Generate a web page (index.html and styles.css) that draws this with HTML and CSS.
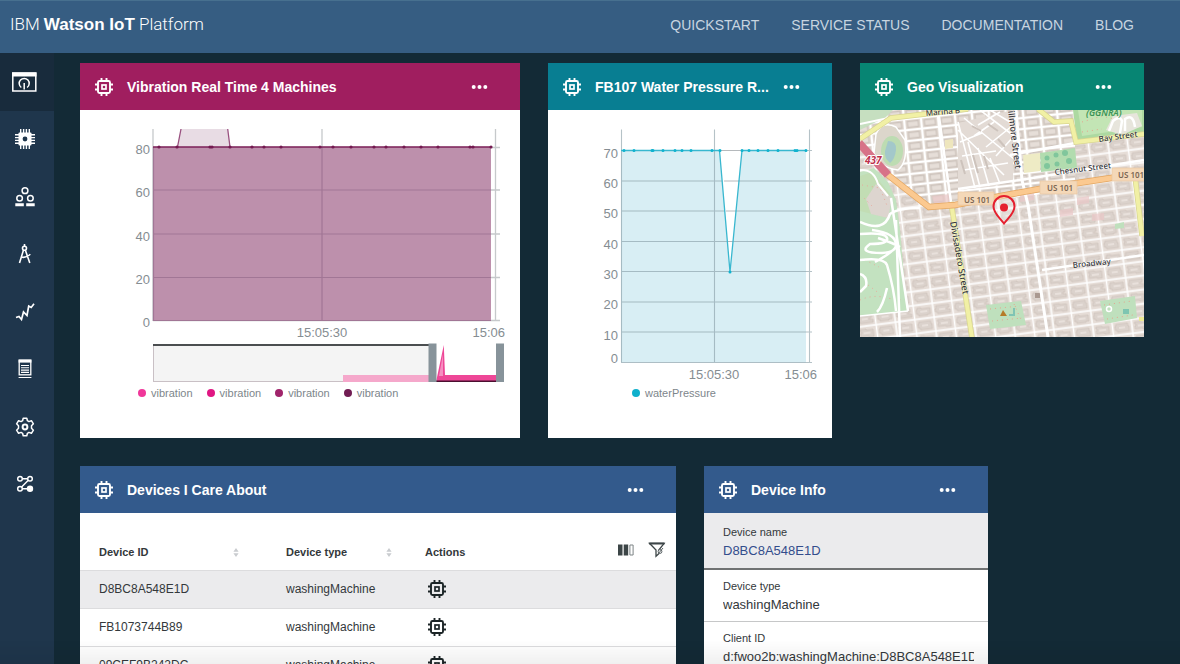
FILE: index.html
```html
<!DOCTYPE html>
<html lang="en">
<head>
<meta charset="utf-8">
<meta name="viewport" content="width=device-width, initial-scale=1">
<title>IBM Watson IoT Platform</title>
<link rel="stylesheet" href="styles.css">
</head>
<body>
<svg class="sprite" aria-hidden="true">
  <symbol id="chip" viewBox="0 0 18 18">
    <rect x="3" y="3" width="12" height="12" rx="1.5" fill="none" stroke="currentColor" stroke-width="1.9"/>
    <rect x="7" y="7" width="4" height="4" fill="none" stroke="currentColor" stroke-width="1.7"/>
    <path d="M6.500 0v3M11.500 0v3M6.500 15v3M11.500 15v3M0 6.500h3M0 11.500h3M15 6.500h3M15 11.500h3" stroke="currentColor" stroke-width="1.900"/>
  </symbol>
  <symbol id="dots" viewBox="0 0 16 6">
    <g fill="currentColor"><circle cx="2.2" cy="3" r="2"/><circle cx="8" cy="3" r="2"/><circle cx="13.8" cy="3" r="2"/></g>
  </symbol>
  <symbol id="sort" viewBox="0 0 6 9">
    <path d="M3 0l2.6 3.8H.4zM3 9L.4 5.2h5.2z" fill="#c9cccf"/>
  </symbol>
</svg>

<header class="topbar">
  <a class="brand" href="#">IBM <b>Watson IoT</b> Platform</a>
  <nav class="toplinks" aria-label="Site">
    <a href="#">QUICKSTART</a>
    <a href="#">SERVICE STATUS</a>
    <a href="#">DOCUMENTATION</a>
    <a href="#">BLOG</a>
  </nav>
</header>

<div class="shell">
  <nav class="sidebar" aria-label="Sections">
    <div class="sidebar-list">
      <a class="side-item active" href="#" aria-label="Boards">
        <svg width="26" height="20" viewBox="0 0 26 20"><rect x="1.8" y="1" width="23" height="18" fill="none" stroke="#fff" stroke-width="1.5"/><path d="M1 .5h24.500v4H1z" fill="#fff"/><path d="M10.300 15.500a5 5 0 1 1 5.800 0M13.200 11v6.500" fill="none" stroke="#fff" stroke-width="1.500"/></svg>
      </a>
      <a class="side-item" href="#" aria-label="Devices">
        <svg width="20" height="20" viewBox="0 0 20 20"><path d="M5.700 0v20M8.600 0v20M11.400 0v20M14.300 0v20M0 5.700h20M0 8.600h20M0 11.400h20M0 14.300h20" stroke="#fff" stroke-width="1.400"/><rect x="3.500" y="3.500" width="13" height="13" rx="1" fill="#fff"/><circle cx="10" cy="10" r="2.400" fill="#1f364c"/></svg>
      </a>
      <a class="side-item" href="#" aria-label="Members">
        <svg width="20" height="20" viewBox="0 0 20 20"><g fill="none" stroke="#fff" stroke-width="1.500"><circle cx="10" cy="3.700" r="2.900"/><circle cx="4.600" cy="11.200" r="2.800"/><circle cx="15.400" cy="11.200" r="2.800"/></g><path d="M.3 16.300h8.500v3H.3zM11.200 16.300h8.500v3h-8.500z" fill="#fff"/></svg>
      </a>
      <a class="side-item" href="#" aria-label="Apps">
        <svg width="20" height="20" viewBox="0 0 20 20"><g fill="none" stroke="#fff" stroke-width="1.600"><circle cx="9.500" cy="4.300" r="2"/><path d="M9.500 0v2.300M8.500 6L4.500 19M10.300 6l4.500 13M5.800 13q5 1.600 9.500-2.800"/></g></svg>
      </a>
      <a class="side-item" href="#" aria-label="Usage">
        <svg width="20" height="20" viewBox="0 0 20 20"><path d="M1 15.500l3-1 2.500 3 2-7.500 3.500 3.500L13.700 4l2.500 1.500L19 1.800" fill="none" stroke="#fff" stroke-width="1.700"/></svg>
      </a>
      <a class="side-item" href="#" aria-label="Logs">
        <svg width="20" height="20" viewBox="0 0 20 20"><rect x="4.200" y="1.200" width="11.600" height="14.600" fill="none" stroke="#fff" stroke-width="1.300"/><path d="M3.600.6h12.800v3H3.600z" fill="#fff"/><path d="M6 6.500h8M6 8.800h8M6 11.100h8M6 13.400h8M3.600 18.500h12.800" stroke="#fff" stroke-width="1.100"/></svg>
      </a>
      <a class="side-item" href="#" aria-label="Settings">
        <svg width="20" height="20" viewBox="0 0 20 20"><path d="M8.200 1.200h3.600l.6 2.500 1.500.9 2.500-.9 2 3.100-1.900 1.900v2.600l1.900 1.900-2 3.100-2.500-.9-1.500.9-.6 2.500H8.200l-.6-2.500-1.500-.9-2.500.9-2-3.100 1.900-1.900V8.700L1.600 6.800l2-3.100 2.500.9 1.500-.9z" fill="none" stroke="#fff" stroke-width="1.500" stroke-linejoin="round"/><circle cx="10" cy="10" r="2.400" fill="none" stroke="#fff" stroke-width="2"/></svg>
      </a>
      <a class="side-item" href="#" aria-label="Extensions">
        <svg width="20" height="20" viewBox="0 0 20 20"><g fill="none" stroke="#fff" stroke-width="1.500"><circle cx="5" cy="4.700" r="2.300"/><circle cx="15" cy="4.700" r="2.300"/><circle cx="5" cy="14.700" r="2.300"/><path d="M7.300 4.700h5.400M13.300 6.300l-6.700 6.700M7.300 14.700H12"/></g><circle cx="15" cy="14.700" r="3.200" fill="#fff"/></svg>
      </a>
    </div>
  </nav>

  <main class="board">
    <section class="card span3">
      <header class="card-head magenta">
        <svg class="chip"><use href="#chip"/></svg>
        <h2>Vibration Real Time 4 Machines</h2>
        <button type="button" class="more" aria-label="More"><svg><use href="#dots"/></svg></button>
      </header>
      <div class="chart-body">
        <svg class="chart" viewBox="80 110 440 274" role="img" aria-label="Vibration over time">
          <g stroke="#c6c9cb" stroke-width="1.300"><path d="M153 129V321M322 129V321M495.500 129V321M153 147.500H500M153 190H500M153 234H500M153 277.500H500M153 320.500H500" fill="none"/></g>
          <path d="M177 147L181 129H227.500L230 147z" fill="#e8dce4"/>
          <path d="M177.500 147L181 129M227.700 129L230 147" stroke="#99507f" stroke-width="1.300"/>
          <path d="M153 147H491V321H153z" fill="#bd90ac"/>
          <path d="M153 190H491M153 234H491M153 277.500H491M153 320.500H491M322 147V321M153.500 147V321" stroke="#a17695" stroke-width="1.200" fill="none"/>
          <path d="M153 147H491" stroke="#7d2058" stroke-width="1.600"/>
          <path d="M159 147h0M177 147h0M210 147h0M212 147h0M230 147h0M252 147h0M264 147h0M281 147h0M320 147h0M333 147h0M351 147h0M374 147h0M386 147h0M404 147h0M421 147h0M438 147h0M470 147h0M473 147h0M491 147h0" stroke="#741a50" stroke-width="3.200" stroke-linecap="round"/>
          <g class="tick" text-anchor="end"><text x="150" y="154">80</text><text x="150" y="197">60</text><text x="150" y="241">40</text><text x="150" y="284">20</text><text x="150" y="327">0</text><text x="505" y="337">15:06</text></g>
          <text class="tick" text-anchor="middle" x="322" y="337">15:05:30</text>
          <path d="M153 344H429V381.500H153z" fill="#f4f4f4"/>
          <path d="M153.500 344V381.500M153 381.500H343" stroke="#c9c0c5" fill="none"/>
          <path d="M153 345H430" stroke="#4b4e50" stroke-width="1.800"/>
          <path d="M343 375H429V382H343z" fill="#f5a8cb"/>
          <path d="M436 382L443.800 345L445 375H497V382z" fill="#ee4797"/>
          <path d="M439 376L443 354V376z" fill="#f58fc0"/>
          <path d="M436 381.300H497" stroke="#4a0f30" stroke-width="1.500"/>
          <path d="M428.500 343.500h8v38.500h-8zM496 343.500h8v38.500h-8z" fill="#87939a"/>
        </svg>
        <ul class="legend legend-a">
          <li><i class="dot c1"></i>vibration</li>
          <li><i class="dot c2"></i>vibration</li>
          <li><i class="dot c3"></i>vibration</li>
          <li><i class="dot c4"></i>vibration</li>
        </ul>
      </div>
    </section>

    <section class="card span2">
      <header class="card-head teal">
        <svg class="chip"><use href="#chip"/></svg>
        <h2>FB107 Water Pressure R...</h2>
        <button type="button" class="more" aria-label="More"><svg><use href="#dots"/></svg></button>
      </header>
      <div class="chart-body">
        <svg class="chart" viewBox="548 110 284 274" role="img" aria-label="Water pressure over time">
          <path d="M621 150.500H719.500L730 272L742 150.500H806V362.500H621z" fill="#d8eef4"/>
          <path d="M621.500 129.500V362.500M714.500 129.500V362.500M809.500 129.500V362.500M621 150.500H812M621 181H812M621 211H812M621 241.500H812M621 271.500H812M621 302H812M621 332H812M621 362.500H812" stroke="#8499a2" stroke-opacity=".6" stroke-width="1.100" fill="none"/>
          <path d="M720.300 151.200H741.200L730 271z" fill="#fff"/>
          <path d="M720 150.500H742M724 181H739M726 211H736M728 241.500H733" stroke="#b5b9bc" stroke-width="1"/>
          <path d="M621 150.500H719.500L730 272L742 150.500H806" stroke="#39b7cf" stroke-width="1.300" fill="none"/>
          <path d="M624 150.500h0M634 150.500h0M652 150.500h0M653 150.500h0M663 150.500h0M675 150.500h0M682 150.500h0M691 150.500h0M712 150.500h0M720 150.500h0M730 272h0M742 150.500h0M749 150.500h0M758 150.500h0M768 150.500h0M778 150.500h0M795 150.500h0M797 150.500h0M806 150.500h0" stroke="#10b3cf" stroke-width="3" stroke-linecap="round"/>
          <g class="tick" text-anchor="end"><text x="618" y="158">70</text><text x="618" y="188">60</text><text x="618" y="218">50</text><text x="618" y="249">40</text><text x="618" y="279">30</text><text x="618" y="309">20</text><text x="618" y="340">10</text><text x="618" y="363">0</text><text x="817" y="379">15:06</text></g>
          <text class="tick" text-anchor="middle" x="714" y="379">15:05:30</text>
        </svg>
        <ul class="legend legend-b"><li><i class="dot c5"></i>waterPressure</li></ul>
      </div>
    </section>

    <section class="card span2 fit">
      <header class="card-head green">
        <svg class="chip"><use href="#chip"/></svg>
        <h2>Geo Visualization</h2>
        <button type="button" class="more" aria-label="More"><svg><use href="#dots"/></svg></button>
      </header>
      <svg class="map" viewBox="0 0 284 227" role="img" aria-label="Street map">
        <defs>
          <pattern id="blocks" width="39" height="28" patternUnits="userSpaceOnUse" patternTransform="translate(8 4) rotate(-7.500)">
            <rect width="39" height="28" fill="#fff"/>
            <path d="M.8.8h18v12.400H.8zM20.300.8h18v12.400h-18zM.8 14.800h18v12.400H.8zM20.300 14.800h18v12.400h-18z" fill="#e6ddd7"/>
            <path d="M3 3h13v3h-2v2h3v3H4V9H2V6h1zM23 3h4v1h9v6h-3v1h-9V9h-2V5h1zM3 17h6v1h7v7h-5v-1H3v-3h1v-2H3zM23 17h12v3h1v5H24v-2h-2v-4h1z" fill="#dbd2cc" stroke="#cbc0b9" stroke-width=".7"/>
            <path d="M6 6h6v2H6zM26 6h7v2h-7zM6 20h7v2H6zM26 20h6v2h-6z" fill="#e8e0db"/>
          </pattern>
          <pattern id="marina" width="34" height="22" patternUnits="userSpaceOnUse" patternTransform="translate(9 2) rotate(-6)">
            <rect width="34" height="22" fill="#fff"/>
            <path d="M1 1h15v9H1zM18 1h15v9H18zM1 12h15v9H1zM18 12h15v9H18z" fill="#e4dcd5"/>
            <path d="M3 2.500h11v6H3zM20 2.500h11v6H20zM3 13.500h11v6H3zM20 13.500h11v6H20z" fill="#e6ded8" stroke="#cdc3bc" stroke-width="1.300"/>
          </pattern>
        </defs>
        <rect width="284" height="227" fill="url(#blocks)"/>
        <path d="M0 0H215V80L95 95L68 95L28 62L0 35z" fill="url(#marina)"/>
        <path d="M98 13L153 0V70L135 76L98 80z" fill="#e3dbd5"/>
        <path d="M98 20l46 45M104 8l50 41M120 0l34 26M130 0l20 12M98 12l17 66M108 32l12 45M118 38l11 38M130 48l10 26M100 32l22-9M102 46l34-5M104 60l44-7M118 15l22-13M114 26l20-14M126 37l26-21M136 46l18-20" fill="none" stroke="#fff" stroke-width="1.600"/>
        <path d="M101 50l4 14M113 45l5 18M124 46l4 13M112 16l9 5M128 14l10 7M138 29l7 8" stroke="#cdc3bc" stroke-width="2"/>

        <path d="M0 0H33L26 7L0 20z" fill="#c6dfc0"/>
        <path d="M0 14L38 6" stroke="#fff" stroke-width="2"/>
        <path d="M16 24Q22 10 36 17L45 30Q48 52 38 60Q20 58 14 43z" fill="#dcd6cb" stroke="#fff" stroke-width="1.500"/>
        <ellipse cx="32" cy="41" rx="11" ry="15" fill="#bddcb2"/>
        <path d="M28 31q9 0 8 9t-6 13q-6-5-5-12z" fill="#a3c8ca"/>
        <path d="M0 62L14 58L28 72L36 90L40 120L47 201L0 206z" fill="#c3e2c0"/>
        <path d="M0 66l12-4 18 22-2 24-28-7z" fill="#c2ddb4"/>
        <path d="M16 74l16 14-4 20-17-4-5-15z" fill="#ddd5cf"/>
        <g fill="none" stroke="#e9aa9c" stroke-width="1" stroke-dasharray="1 4"><path d="M2 75l18 3 8 20M4 88l9 9M0 190q14-6 26-2l18 2M5 150l14 7M8 175l12 9"/></g>
        <g fill="none" stroke="#fff" stroke-width="2.500"><path d="M0 112Q24 123 30 104Q38 98 60 98M0 124Q25 122 27 128T10 134Q-3 143 22 143Q37 142 36 134M0 150Q24 147 27 155Q34 178 36 201M0 164q8 3 6 12l-6 6M27 178q-4 18-10 24M12 120q24 3 24 15M18 128q15 5 22 9M15 152q22-12 21-17"/><path d="M0 206L48 201" stroke-width="1.500"/></g>
        <path d="M213 0H284V25L217 32z" fill="#add9a1"/>
        <path d="M218 0h64v17l-60 9z" fill="#c3e5b5"/>
        <path d="M246 20l7-14 24-3 5 13-20 9z" fill="#e7e5dc"/><path d="M249 21l4-10q7-6 9 0l-2 12M265 21V9q8-6 10 8" fill="none" stroke="#fff" stroke-width="2.500"/>
        <path d="M163 45L180 43V61L164 63z" fill="#eeebc5"/>
        <path d="M180 43L215 38L217 58L181 62z" fill="#b2dcaf"/>
        <g fill="#80c69c"><circle cx="187" cy="48" r="2.500"/><circle cx="196" cy="45" r="2.500"/><circle cx="205" cy="43" r="3"/><circle cx="187" cy="56" r="3"/><circle cx="197" cy="54" r="2.500"/><circle cx="209" cy="51" r="3"/></g>
        <path d="M85 30l8-1v9l-8 1z" fill="#eee6bd"/>
        <path d="M126 195L161 191L166 215L130 219zM240 191L275 186L277 208L245 214zM255 114l9-2v6l-9 1z" fill="#bfe0bd"/>
        <path d="M143 200l4 6h-7z" fill="#b67b28"/><path d="M149 205h5v-7" fill="none" stroke="#7fc4b4" stroke-width="2"/>
        <circle cx="249" cy="199" r="2.500" fill="none" stroke="#fff" stroke-width="1.500"/><path d="M263 199h6v5h-6z" fill="#7ec5b1"/>
        <g fill="none" stroke="#e6a48e" stroke-width="1" stroke-dasharray="1 4"><path d="M130 199l30-3M132 211l30-3M154 194l8 18M244 195l28-4M247 209l26-4M222 12l20-6 12 3M222 22l20-3"/></g>
        <g fill="#e9c8c7" fill-opacity=".7"><path d="M72 86l18-2v8l-16 2zM160 85l14-2v7l-14 2zM200 100l13-2v7l-13 2zM217 88l12-2v7l-12 2zM232 104l12-1v7l-12 1z"/></g>
        <path d="M175 183h5v5h-5z" fill="#aa9990"/>
        <g fill="none" stroke="#fff"><path d="M156 0L162 70L168 95L188 227" stroke-width="3"/><path d="M78 0L91 92M31 88L48 201M36 110L40 227" stroke-width="2.500"/><path d="M98 79L160 70L284 50M182 160L284 145M150 45L215 33" stroke-width="2.500"/></g>
        <g fill="none" stroke="#d8d590" stroke-width="5.500"><path d="M0 29L31 8L108-1M178-1L194 12L211 11L216 32L284 24M91 92L112 228M275 66L282 126"/></g>
        <g fill="none" stroke="#f1f0a5" stroke-width="4"><path d="M0 29L31 8L108-1M178-1L194 12L211 11L216 32L284 24M91 92L112 228M275 66L282 126"/></g>
        <path d="M279 209h5" stroke="#ecea94" stroke-width="4"/>
        <path d="M28 65L56 87L69 97L95 95L141 86L185 78L251 68L284 62" fill="none" stroke="#e3a661" stroke-width="6.500"/>
        <path d="M28 65L56 87L69 97L95 95L141 86L185 78L251 68L284 62" fill="none" stroke="#fbc990" stroke-width="5"/>
        <path d="M-1 33L28 65" stroke="#d77288" stroke-width="8"/>
        <path d="M0 60q14-1 18 14l10 12" fill="none" stroke="#fff" stroke-width="2"/>
        <g fill="#f4d8b8" stroke="#e8c7a0" stroke-width=".7"><path d="M98 82h36v13H98zM180 71h37v13h-37zM252 58h36v13h-36z"/></g>
        <g class="shield"><text x="104" y="93">US 101</text><text x="187" y="81">US 101</text><text x="258" y="68">US 101</text></g>
        <text class="exit" x="5" y="54">437</text>
        <text class="gg" x="226" y="6">(GGNRA)</text>
        <g class="street">
          <text x="66" y="6" transform="rotate(-5 66 6)">Marina B</text>
          <text class="long" transform="translate(148 1) rotate(83)">illmore Street</text>
          <text transform="translate(239 32) rotate(-8)">Bay Street</text>
          <text transform="translate(195 65) rotate(-7)">Chesnut Street</text>
          <text transform="translate(213 158) rotate(-6)">Broadway</text>
          <text class="long" transform="translate(90 112) rotate(80)">Divisadero Street</text>
        </g>
        <path d="M144 113.500C139 107 133.500 103 133.500 96.500A10.500 10.500 0 0 1 154.500 96.500C154.500 103 149 107 144 113.500z" fill="#fff" fill-opacity=".25" stroke="#e5202f" stroke-width="2"/>
        <circle cx="144" cy="97.500" r="4" fill="#e5202f"/>
      </svg>
    </section>

    <section class="card span4">
      <header class="card-head blue">
        <svg class="chip"><use href="#chip"/></svg>
        <h2>Devices I Care About</h2>
        <button type="button" class="more" aria-label="More"><svg><use href="#dots"/></svg></button>
      </header>
      <table class="devices">
        <colgroup><col class="col-id"><col class="col-type"><col class="col-act"><col></colgroup>
        <thead>
          <tr>
            <th scope="col"><span class="th">Device ID <svg class="sort"><use href="#sort"/></svg></span></th>
            <th scope="col"><span class="th">Device type <svg class="sort"><use href="#sort"/></svg></span></th>
            <th scope="col">Actions</th>
            <td>
              <div class="tools">
                <button type="button" aria-label="Columns"><svg width="18" height="16" viewBox="0 0 18 16"><path d="M1 2.500h4.500v11H1zM6.700 2.500h4.500v11H6.700z" fill="#3c4547"/><path d="M12.900 3h3.200v10h-3.200z" fill="none" stroke="#7c8385"/></svg></button>
                <button type="button" aria-label="Filter"><svg width="18" height="16" viewBox="0 0 18 16"><path d="M1.500 1.300h14.600L10.800 8v3.800L8 14.300V8z" fill="none" stroke="#3c4547" stroke-width="1.300"/><path d="M1.200 1.500h15.200" stroke="#3c4547" stroke-width="2"/><circle cx="12" cy="9.500" r="1.900" fill="#fff" stroke="#596163"/><path d="M10 12l5-6" stroke="#596163"/></svg></button>
              </div>
            </td>
          </tr>
        </thead>
        <tbody>
          <tr class="selected"><td>D8BC8A548E1D</td><td>washingMachine</td><td><button type="button" class="act" aria-label="Open device"><svg class="chip"><use href="#chip"/></svg></button></td><td></td></tr>
          <tr><td>FB1073744B89</td><td>washingMachine</td><td><button type="button" class="act" aria-label="Open device"><svg class="chip"><use href="#chip"/></svg></button></td><td></td></tr>
          <tr><td>09CEF9B242DC</td><td>washingMachine</td><td><button type="button" class="act" aria-label="Open device"><svg class="chip"><use href="#chip"/></svg></button></td><td></td></tr>
        </tbody>
      </table>
    </section>

    <section class="card span2">
      <header class="card-head blue">
        <svg class="chip"><use href="#chip"/></svg>
        <h2>Device Info</h2>
        <button type="button" class="more" aria-label="More"><svg><use href="#dots"/></svg></button>
      </header>
      <dl class="info">
        <div class="info-row current"><dt>Device name</dt><dd>D8BC8A548E1D</dd></div>
        <div class="info-row"><dt>Device type</dt><dd>washingMachine</dd></div>
        <div class="info-row"><dt>Client ID</dt><dd>d:fwoo2b:washingMachine:D8BC8A548E1D</dd></div>
      </dl>
    </section>
  </main>
</div>
</body>
</html>
```
FILE: styles.css
```css
* { box-sizing: border-box; }
body {
  margin: 0;
  height: 100vh;
  display: flex;
  flex-direction: column;
  overflow: hidden;
  background: #132a36;
  color: #33383b;
  font-family: "Liberation Sans", Arial, sans-serif;
  font-size: 12px;
}
body::after {
  content: "";
  position: fixed;
  left: 0;
  right: 0;
  bottom: 0;
  height: 24px;
  background: linear-gradient(rgba(0, 0, 0, 0), rgba(0, 0, 0, 0.06));
  pointer-events: none;
}
a { color: inherit; text-decoration: none; }
button { border: 0; padding: 0; background: none; color: inherit; cursor: pointer; }
svg { display: block; }
.sprite { position: absolute; width: 0; height: 0; }

.topbar {
  flex: none;
  height: 53px;
  display: flex;
  align-items: center;
  justify-content: space-between;
  padding: 0 46px 5px 10px;
  background: #365d82;
  border-top: 1px solid #47708f;
  color: #fff;
}
.brand { font-family: Roboto, "Liberation Sans", sans-serif; font-size: 17px; font-weight: 300; }
.brand b { font-family: "Liberation Sans", Arial, sans-serif; font-weight: 700; }
.toplinks { display: flex; gap: 32px; font-size: 14px; color: #c8d5e0; }

.shell { flex: 1; min-height: 0; display: flex; }
.sidebar { flex: none; width: 54px; background: #1f364c; }
.sidebar-list { height: 460px; display: grid; grid-auto-rows: 1fr; }
.side-item { display: flex; align-items: center; justify-content: center; padding-right: 4px; }
.side-item.active { background: #182b3c; padding-right: 6px; }

.board {
  flex: 1;
  min-width: 0;
  overflow-y: auto;
  scrollbar-width: none;
  display: grid;
  grid-template-columns: repeat(7, minmax(0, 1fr));
  grid-auto-rows: max-content;
  align-content: start;
  gap: 28px;
  padding: 10px 36px 28px 26px;
}
.card { background: #fff; }
.span2 { grid-column: span 2; }
.span3 { grid-column: span 3; }
.span4 { grid-column: span 4; }
.fit { align-self: start; }

.card-head {
  height: 47px;
  display: flex;
  align-items: center;
  gap: 14px;
  padding: 0 32px 0 15px;
  color: #fff;
}
.card-head h2 {
  flex: 1;
  min-width: 0;
  margin: 0;
  font-size: 14px;
  line-height: 20px;
  font-weight: 700;
  white-space: nowrap;
}
.chip { flex: none; width: 18px; height: 18px; }
.more svg { width: 17px; height: 6px; }
.magenta { background: #a01e5f; }
.teal { background: #087e92; }
.green { background: #078573; }
.blue { background: #335a8c; }

.chart-body { padding-bottom: 36px; }
.chart { width: 100%; height: auto; }
.tick { font-size: 13px; fill: #858d92; }
.legend {
  display: flex;
  gap: 14px;
  margin: 0;
  padding: 0;
  list-style: none;
  font-size: 11px;
  line-height: 18px;
  color: #7d868b;
}
.legend-a { padding-left: 58px; }
.legend-b { padding-left: 84px; }
.legend li { display: flex; align-items: center; gap: 5px; }
.dot { width: 8px; height: 8px; border-radius: 50%; }
.c1 { background: #f0379a; }
.c2 { background: #e01783; }
.c3 { background: #a0246b; }
.c4 { background: #711d53; }
.c5 { background: #0fb0cc; }

.map { width: 100%; height: auto; }
.street, .shield, .exit, .gg { font-family: "Noto Sans", sans-serif; }
.street { font-size: 8px; font-weight: 500; fill: #35363a; stroke: #fff; stroke-width: 1px; stroke-opacity: 0.5; paint-order: stroke; }
.long { font-size: 9px; }
.shield { font-size: 8px; font-weight: 600; fill: #7b6653; }
.exit { font-size: 10px; font-style: italic; font-weight: 700; fill: #bd2f4b; stroke: #fff; stroke-width: 2px; paint-order: stroke; }
.gg { font-size: 9px; font-style: italic; font-weight: 600; fill: #3d9357; }

.devices { width: 100%; table-layout: fixed; border-collapse: collapse; }
.col-id { width: 206px; }
.col-type { width: 139px; }
.col-act { width: 90px; }
.devices th, .devices td { padding: 0; text-align: left; height: 38px; border-bottom: 1px solid #dcdcde; }
.devices thead th, .devices thead td { height: 57px; padding-top: 22px; font-size: 11px; }
.devices th:first-child, .devices td:first-child { padding-left: 19px; }
.th { display: flex; align-items: center; justify-content: space-between; padding-right: 47px; }
.devices th + th .th { padding-right: 33px; }
.sort { width: 6px; height: 9px; }
.selected { background: #ebebed; }
.act { display: block; margin-left: 3px; color: #1c2527; }
.tools { display: flex; justify-content: flex-end; gap: 13px; padding: 0 10px 5px 0; }

.info { margin: 0; }
.info-row { padding: 8px 14px 5px 19px; border-bottom: 1px solid #c6c7c8; }
.info-row.current { padding: 11px 14px 6px 19px; background: #ebebed; border-bottom: 2px solid #707273; }
.info dt { font-size: 11px; line-height: 16px; }
.info dd { margin: 0; overflow: hidden; white-space: nowrap; font-size: 13px; line-height: 22px; }
.current dd { color: #334d8c; }
```
